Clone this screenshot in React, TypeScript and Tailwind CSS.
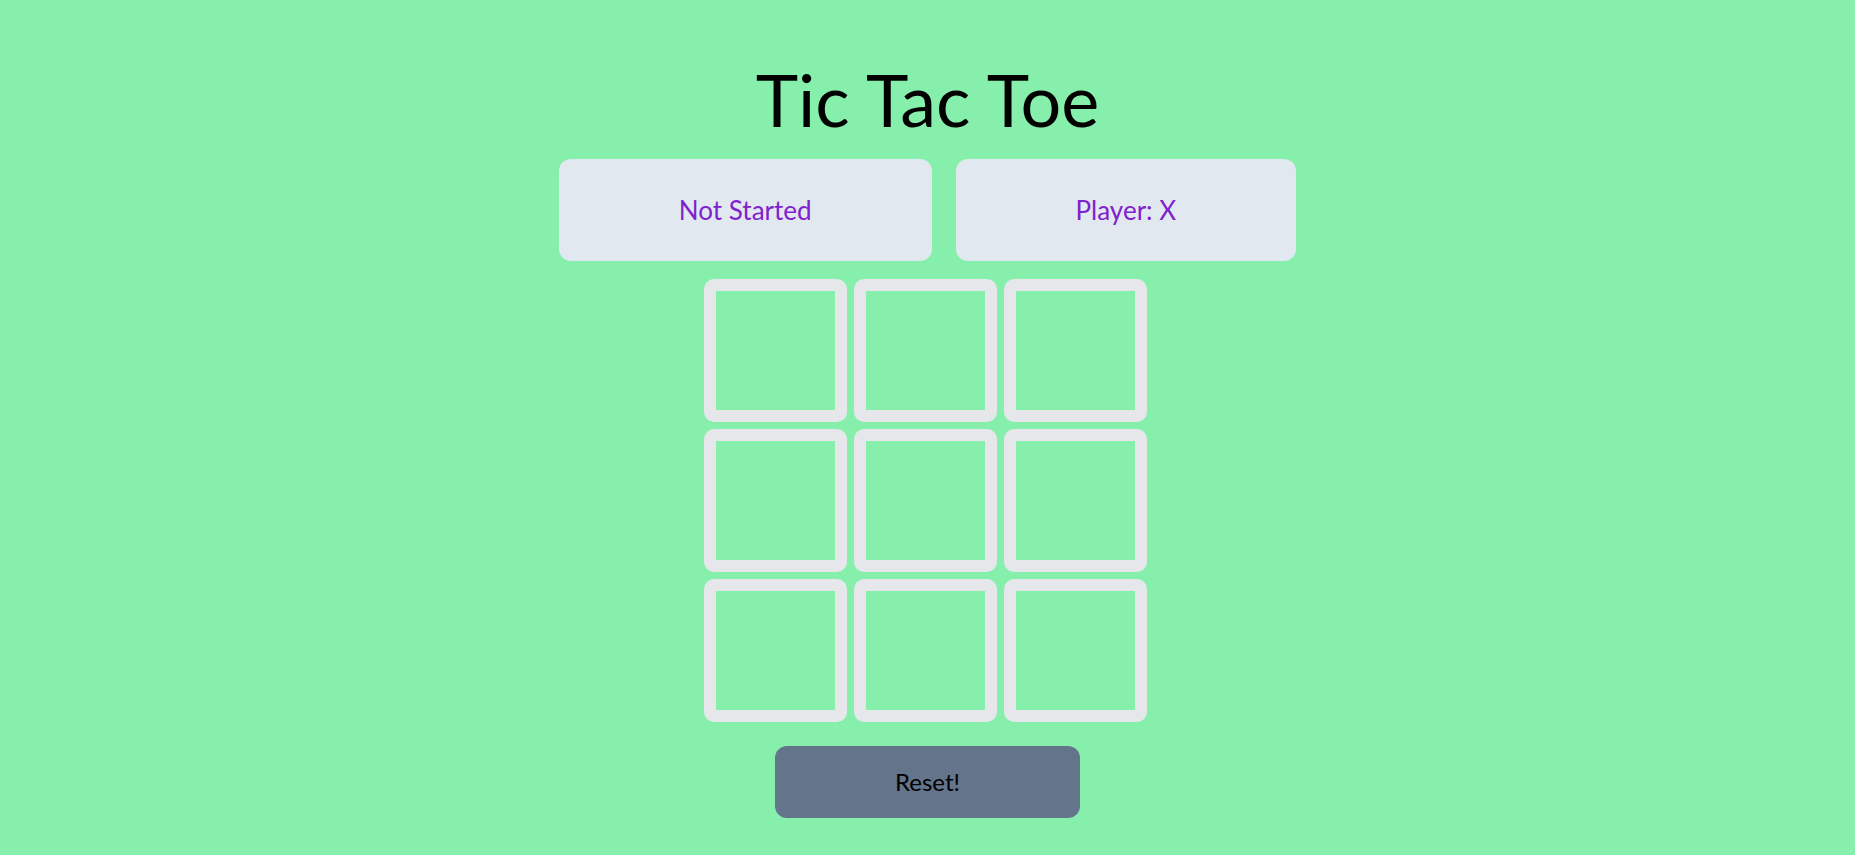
import { useState } from "react";

type Cell = "X" | "O" | null;

const lines = [
    [0, 1, 2], [3, 4, 5], [6, 7, 8],
    [0, 3, 6], [1, 4, 7], [2, 5, 8],
    [0, 4, 8], [2, 4, 6],
];

function getWinner(board: Cell[]) {
    for (const [a, b, c] of lines) {
        if (board[a] && board[a] === board[b] && board[a] === board[c]) return board[a];
    }
    return null;
}

export default function App() {
    const [board, setBoard] = useState<Cell[]>(Array(9).fill(null))
    const [player, setPlayer] = useState<"X" | "O">("X")

    const winner = getWinner(board);
    const started = board.some((c) => c !== null);
    const full = board.every((c) => c !== null);

    let status = "Not Started";
    if (winner) status = `Winner: ${winner}`;
    else if (full) status = "Draw";
    else if (started) status = "In Progress";

    const play = (i: number) => {
        if (board[i] || winner) return;
        const next = [...board];
        next[i] = player;
        setBoard(next);
        setPlayer(player === "X" ? "O" : "X");
    }

    const reset = () => {
        setBoard(Array(9).fill(null));
        setPlayer("X");
    }

  return (
    <main className="min-h-screen w-full bg-[#86efac] font-[Lato,sans-serif] flex flex-col items-center pt-[63px]">
        <h1 className="text-7xl leading-none text-black">Tic Tac Toe</h1>

        {/* status */}
        <div className="flex gap-6 mt-6">
            <div className="bg-[#e2e8f0] rounded-xl px-30 py-[33px] text-[26px] leading-9 text-[#7e22ce]">{status}</div>
            <div className="bg-[#e2e8f0] rounded-xl px-30 py-[33px] text-[26px] leading-9 text-[#7e22ce]">Player: {player}</div>
        </div>

        {/* board */}
        <div className="grid grid-cols-3 gap-[7px] mt-[18px] mr-[5px]">
            {
                board.map((cell, i) => (
                    <button key={i} onClick={() => play(i)} className="w-[143px] h-[143px] border-[12px] border-[#e5e7eb] rounded-[10px] text-6xl text-[#7e22ce] flex items-center justify-center cursor-pointer">
                        {cell}
                    </button>
                ))
            }
        </div>

        <button onClick={reset} className="mt-6 bg-[#64748b] rounded-xl px-30 py-5 text-2xl leading-8 text-black cursor-pointer">Reset!</button>
    </main>
  )
}
